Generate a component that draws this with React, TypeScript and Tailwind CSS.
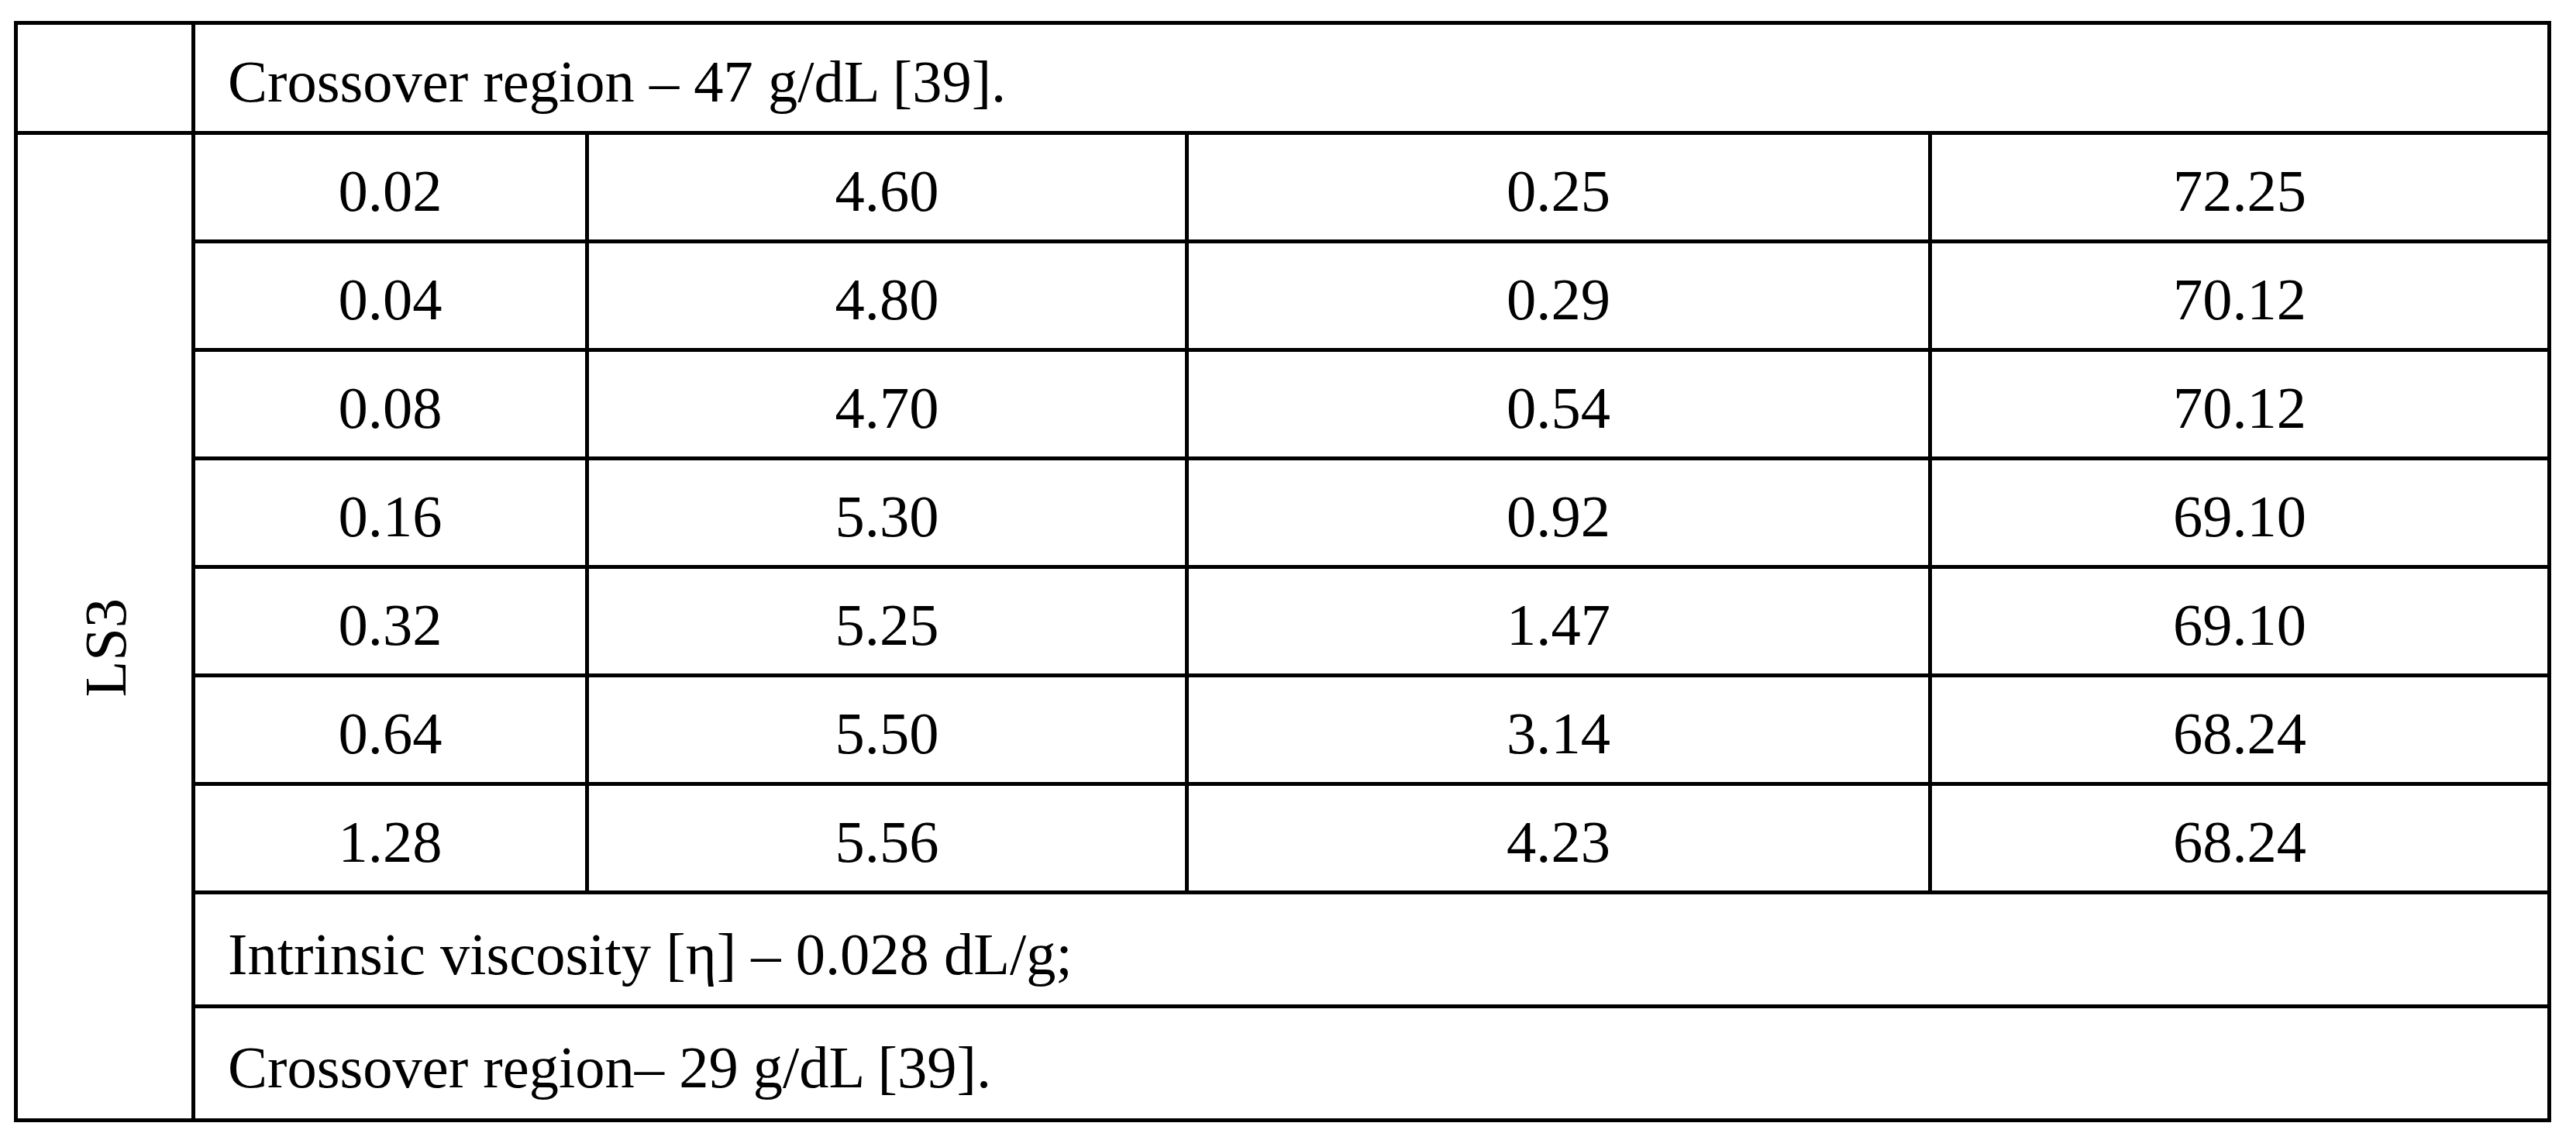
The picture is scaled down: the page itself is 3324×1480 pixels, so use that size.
import React from "react";

const rows: string[][] = [
  ["0.02", "4.60", "0.25", "72.25"],
  ["0.04", "4.80", "0.29", "70.12"],
  ["0.08", "4.70", "0.54", "70.12"],
  ["0.16", "5.30", "0.92", "69.10"],
  ["0.32", "5.25", "1.47", "69.10"],
  ["0.64", "5.50", "3.14", "68.24"],
  ["1.28", "5.56", "4.23", "68.24"],
];

export default function App() {
  return (
    <div className="w-[3324px] h-[1480px] bg-white font-['Liberation_Serif',serif] text-[76.5px] leading-normal text-black">
      <div className="ml-[18px] pt-[27px]">
        <div className="inline-grid grid-cols-[224px_503px_769px_954px_794px] grid-rows-[137px_repeat(7,135px)_142px_142px] gap-[5px] bg-black p-[5px]">
          <div className="bg-white" />
          <div className="col-span-4 flex items-center bg-white pl-[42px] pt-[12px]">
            Crossover region – 47 g/dL [39].
          </div>
          <div className="row-span-9 flex items-center justify-center bg-white pt-[54px] pl-[4px]">
            <span className="rotate-180 [writing-mode:vertical-rl]">LS3</span>
          </div>
          {rows.map((r, i) =>
            r.map((v, j) => (
              <div
                key={`${i}-${j}`}
                className="flex items-center justify-center bg-white pt-[12px]"
              >
                {v}
              </div>
            ))
          )}
          <div className="col-span-4 flex items-center bg-white pl-[42px] pt-[14px]">
            Intrinsic viscosity [η] – 0.028 dL/g;
          </div>
          <div className="col-span-4 flex items-center bg-white pl-[42px] pt-[12px]">
            Crossover region– 29 g/dL [39].
          </div>
        </div>
      </div>
    </div>
  );
}
